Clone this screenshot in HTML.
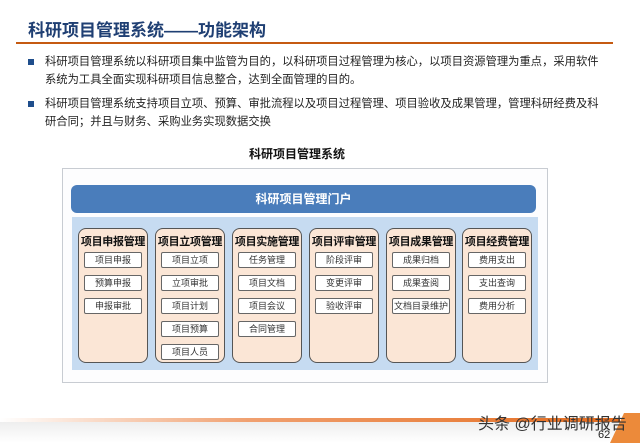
<!DOCTYPE html>
<html><head><meta charset="utf-8"><style>
*{margin:0;padding:0;box-sizing:border-box}
body{width:640px;height:443px;background:#fff;position:relative;overflow:hidden;font-family:"Liberation Sans","Noto Sans CJK SC",sans-serif}
.a{position:absolute}
.t{left:28px;top:16px;font-size:17px;font-weight:bold;color:#1f3f73}
.hl{left:16px;top:42px;width:597px;height:2px;background:#c55a11}
.b{left:28px;font-size:11.3px;color:#222;line-height:18px}
.sq{position:absolute;left:0;top:6px;width:6px;height:6px;background:#1f4e8c}
.b p{margin-left:17px;width:560px}
.outer{left:62px;top:168px;width:486px;height:215px;border:1px solid #c8ccd2;background:#fdfdfe}
.bar{left:71px;top:185px;width:465px;height:28px;background:#4a7dbb;border-radius:6px;color:#fff;font-weight:bold;font-size:12px;text-align:center;line-height:28px}
.lb{left:72px;top:217px;width:466px;height:153px;background:#c6dbf1}
.col{top:228px;width:70px;height:135px;background:#fbe6d6;border:1.3px solid #555;border-radius:8px;text-align:center}
.col h4{font-size:11px;font-weight:bold;color:#111;margin-top:6px;white-space:nowrap;letter-spacing:-0.3px;line-height:14px}
.it{margin:0 auto 7px;width:58px;height:16px;border:1px solid #666;border-radius:2px;background:#fff;font-size:9px;line-height:14px;color:#333;white-space:nowrap}
.col h4+.it{margin-top:3px}
</style></head><body>
<div class="a t">科研项目管理系统——功能架构</div>
<div class="a hl"></div>
<div class="a b" style="top:53px"><span class="sq"></span><p>科研项目管理系统以科研项目集中监管为目的，以科研项目过程管理为核心，以项目资源管理为重点，采用软件系统为工具全面实现科研项目信息整合，达到全面管理的目的。</p></div>
<div class="a b" style="top:95px"><span class="sq"></span><p>科研项目管理系统支持项目立项、预算、审批流程以及项目过程管理、项目验收及成果管理，管理科研经费及科研合同；并且与财务、采购业务实现数据交换</p></div>
<div class="a" style="left:0;width:594px;top:145px;text-align:center;font-size:12px;font-weight:bold;color:#111">科研项目管理系统</div>
<div class="a outer"></div>
<div class="a bar">科研项目管理门户</div>
<div class="a lb"></div>
<div class="a col" style="left:78px"><h4>项目申报管理</h4><div class="it">项目申报</div><div class="it">预算申报</div><div class="it">申报审批</div></div>
<div class="a col" style="left:155px"><h4>项目立项管理</h4><div class="it">项目立项</div><div class="it">立项审批</div><div class="it">项目计划</div><div class="it">项目预算</div><div class="it">项目人员</div></div>
<div class="a col" style="left:232px"><h4>项目实施管理</h4><div class="it">任务管理</div><div class="it">项目文档</div><div class="it">项目会议</div><div class="it">合同管理</div></div>
<div class="a col" style="left:309px"><h4>项目评审管理</h4><div class="it">阶段评审</div><div class="it">变更评审</div><div class="it">验收评审</div></div>
<div class="a col" style="left:386px"><h4>项目成果管理</h4><div class="it">成果归档</div><div class="it">成果查阅</div><div class="it">文档目录维护</div></div>
<div class="a col" style="left:462px"><h4>项目经费管理</h4><div class="it">费用支出</div><div class="it">支出查询</div><div class="it">费用分析</div></div>
<div class="a" style="left:0;top:418px;width:620px;height:4px;background:linear-gradient(90deg,#fff,#f0a070 40%,#e46c1e)"></div>
<div class="a" style="left:0;top:422px;width:620px;height:21px;background:linear-gradient(180deg,#eee,#fff)"></div>
<svg class="a" style="left:610px;top:413px" width="30" height="30"><polygon points="14,0 30,0 30,30 0,30" fill="#ec8a3a"/></svg>
<div class="a" style="left:478px;top:410px;font-size:16px;color:#333;white-space:nowrap">头条 @行业调研报告</div>
<div class="a" style="left:598px;top:429px;font-size:11px;color:#222">62</div>
</body></html>
